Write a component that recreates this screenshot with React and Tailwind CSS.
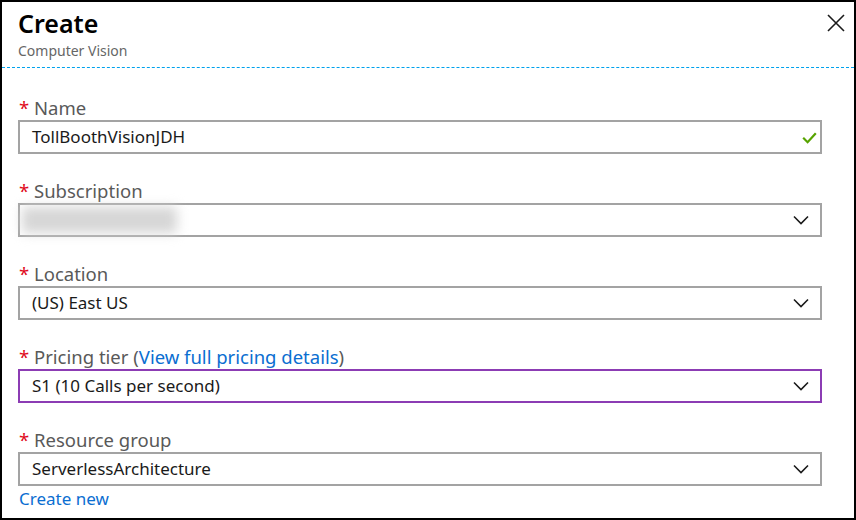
import React from "react";

function Chevron() {
  return (
    <svg width="16" height="10" viewBox="0 0 16 10" className="shrink-0 mr-[11px]">
      <path d="M1 1.5 L8 8.5 L15 1.5" fill="none" stroke="#1a1a1a" strokeWidth="1.6" />
    </svg>
  );
}

function Check() {
  return (
    <svg width="15" height="12" viewBox="0 0 15 12" className="shrink-0 mr-[3px] mt-[2px]">
      <path d="M1.2 5.8 L5.6 10.2 L13.8 1.2" fill="none" stroke="#57a300" strokeWidth="2.2" />
    </svg>
  );
}

function Label({ children }) {
  return (
    <div className="h-[24px] text-[18.5px] leading-[24px] text-[#595959] flex items-start whitespace-nowrap">
      <span className="text-[#e00b1c] w-[16px] pl-[1px]">*</span>
      <span>{children}</span>
    </div>
  );
}

function Box({ children, purple, icon }) {
  return (
    <div
      className={
        "h-[34px] border-2 flex items-center justify-between pl-[12px] text-[17px] text-[#1a1a1a] " +
        (purple ? "border-[#8c3cb4]" : "border-[#a3a3a3]")
      }
    >
      {children}
      {icon === "check" ? <Check /> : <Chevron />}
    </div>
  );
}

export default function App() {
  return (
    <div
      className="w-[856px] h-[520px] bg-white border-2 border-black box-border relative overflow-hidden"
      style={{ fontFamily: '"Noto Sans", "Open Sans", sans-serif' }}
    >
      <div className="pl-[16px] pt-[4px]">
        <div className="text-[25px] leading-[34px] font-semibold text-black">Create</div>
        <div className="text-[14px] leading-[18px] text-[#666] mt-[2px]">Computer Vision</div>
      </div>
      <button className="absolute top-[11px] right-[8px] w-[20px] h-[20px]">
        <svg width="20" height="20" viewBox="0 0 20 20">
          <path d="M2 2 L18 18 M18 2 L2 18" stroke="#1a1a1a" strokeWidth="1.6" />
        </svg>
      </button>
      <div className="mt-[7px] border-t border-dashed border-[#00a2ed]" />
      <div className="pl-[16px] pr-[32px] mt-[28px] flex flex-col gap-[25px]">
        <div className="flex flex-col">
          <Label>Name</Label>
          <Box icon="check">
            <span>TollBoothVisionJDH</span>
          </Box>
        </div>
        <div className="flex flex-col">
          <Label>Subscription</Label>
          <Box>
            <div className="-ml-[10px] h-[26px] w-[155px] bg-[#d6d6d6] blur-[6px]" />
          </Box>
        </div>
        <div className="flex flex-col">
          <Label>Location</Label>
          <Box>
            <span>(US) East US</span>
          </Box>
        </div>
        <div className="flex flex-col">
          <Label>
            Pricing tier (<span className="text-[#0a6ed1]">View full pricing details</span>)
          </Label>
          <Box purple>
            <span>S1 (10 Calls per second)</span>
          </Box>
        </div>
        <div className="flex flex-col">
          <Label>Resource group</Label>
          <Box>
            <span>ServerlessArchitecture</span>
          </Box>
          <div className="text-[17px] leading-[20px] text-[#0a6ed1] mt-[3px] pl-[1px]">Create new</div>
        </div>
      </div>
    </div>
  );
}
